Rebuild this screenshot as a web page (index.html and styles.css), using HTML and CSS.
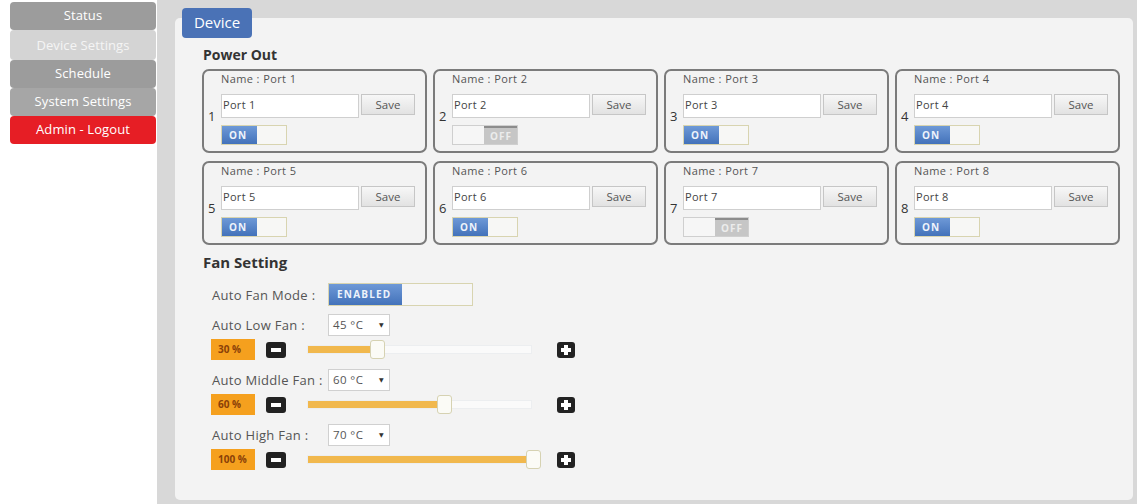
FILE: index.html
```html
<!DOCTYPE html>
<html>
<head>
<meta charset="utf-8">
<title>Device</title>
<link rel="stylesheet" href="styles.css">
</head>
<body>
<div class="page">
  <nav class="sidebar">
    <a class="nav nav-dark">Status</a>
    <a class="nav nav-light">Device Settings</a>
    <a class="nav nav-dark">Schedule</a>
    <a class="nav nav-mid">System Settings</a>
    <a class="nav nav-red">Admin - Logout</a>
  </nav>
  <main class="main">
    <section class="panel">
      <div class="tab">Device</div>
      <h2 class="title">Power Out</h2>
      <div class="ports">
        <div class="port">
          <div class="port-num">1</div>
          <div class="port-body">
            <div class="port-name">Name : Port 1</div>
            <div class="port-edit"><div class="input">Port 1</div><div class="save">Save</div></div>
            <div class="toggle on"><span class="t-on">ON</span><span class="t-rest"></span></div>
          </div>
        </div>
        <div class="port">
          <div class="port-num">2</div>
          <div class="port-body">
            <div class="port-name">Name : Port 2</div>
            <div class="port-edit"><div class="input">Port 2</div><div class="save">Save</div></div>
            <div class="toggle off"><span class="t-rest"></span><span class="t-off">OFF</span></div>
          </div>
        </div>
        <div class="port">
          <div class="port-num">3</div>
          <div class="port-body">
            <div class="port-name">Name : Port 3</div>
            <div class="port-edit"><div class="input">Port 3</div><div class="save">Save</div></div>
            <div class="toggle on"><span class="t-on">ON</span><span class="t-rest"></span></div>
          </div>
        </div>
        <div class="port">
          <div class="port-num">4</div>
          <div class="port-body">
            <div class="port-name">Name : Port 4</div>
            <div class="port-edit"><div class="input">Port 4</div><div class="save">Save</div></div>
            <div class="toggle on"><span class="t-on">ON</span><span class="t-rest"></span></div>
          </div>
        </div>
        <div class="port">
          <div class="port-num">5</div>
          <div class="port-body">
            <div class="port-name">Name : Port 5</div>
            <div class="port-edit"><div class="input">Port 5</div><div class="save">Save</div></div>
            <div class="toggle on"><span class="t-on">ON</span><span class="t-rest"></span></div>
          </div>
        </div>
        <div class="port">
          <div class="port-num">6</div>
          <div class="port-body">
            <div class="port-name">Name : Port 6</div>
            <div class="port-edit"><div class="input">Port 6</div><div class="save">Save</div></div>
            <div class="toggle on"><span class="t-on">ON</span><span class="t-rest"></span></div>
          </div>
        </div>
        <div class="port">
          <div class="port-num">7</div>
          <div class="port-body">
            <div class="port-name">Name : Port 7</div>
            <div class="port-edit"><div class="input">Port 7</div><div class="save">Save</div></div>
            <div class="toggle off"><span class="t-rest"></span><span class="t-off">OFF</span></div>
          </div>
        </div>
        <div class="port">
          <div class="port-num">8</div>
          <div class="port-body">
            <div class="port-name">Name : Port 8</div>
            <div class="port-edit"><div class="input">Port 8</div><div class="save">Save</div></div>
            <div class="toggle on"><span class="t-on">ON</span><span class="t-rest"></span></div>
          </div>
        </div>
      </div>

      <h2 class="title fan-title">Fan Setting</h2>
      <div class="fan">
        <div class="fan-row mode-row">
          <span class="fan-label">Auto Fan Mode :</span>
          <div class="enable"><span class="enable-on">ENABLED</span><span class="enable-rest"></span></div>
        </div>

        <div class="fan-group">
          <div class="fan-row">
            <span class="fan-label">Auto Low Fan :</span>
            <div class="select">45 °C <span class="caret">▼</span></div>
          </div>
          <div class="slider-row">
            <span class="badge">30 %</span>
            <span class="btn minus"></span>
            <div class="track"><div class="fill" style="width:30%"></div><span class="thumb" style="left:30%"></span></div>
            <span class="btn plus"></span>
          </div>
        </div>

        <div class="fan-group">
          <div class="fan-row">
            <span class="fan-label">Auto Middle Fan :</span>
            <div class="select">60 °C <span class="caret">▼</span></div>
          </div>
          <div class="slider-row">
            <span class="badge">60 %</span>
            <span class="btn minus"></span>
            <div class="track"><div class="fill" style="width:60%"></div><span class="thumb" style="left:60%"></span></div>
            <span class="btn plus"></span>
          </div>
        </div>

        <div class="fan-group">
          <div class="fan-row">
            <span class="fan-label">Auto High Fan :</span>
            <div class="select">70 °C <span class="caret">▼</span></div>
          </div>
          <div class="slider-row">
            <span class="badge">100 %</span>
            <span class="btn minus"></span>
            <div class="track"><div class="fill" style="width:100%"></div><span class="thumb" style="left:100%"></span></div>
            <span class="btn plus"></span>
          </div>
        </div>
      </div>
    </section>
  </main>
</div>
</body>
</html>
```

FILE: styles.css
```css
* { box-sizing: border-box; }
html, body { margin: 0; padding: 0; }
body {
  background: #fff;
  font-family: "Open Sans", "Noto Sans", "DejaVu Sans", sans-serif;
  width: 1137px;
  height: 504px;
  overflow: hidden;
  color: #444;
}
.page { display: flex; height: 504px; }

/* Sidebar */
.sidebar {
  width: 157px;
  flex: none;
  padding: 2px 1px 0 10px;
  display: flex;
  flex-direction: column;
  background: #fff;
}
.nav {
  display: block;
  height: 28px;
  line-height: 27px;
  text-align: center;
  color: #fff;
  font-size: 13px;
  letter-spacing: 0.1px;
  border-radius: 4px;
}
.nav-dark { background: #9c9c9c; }
.nav-light { background: #d4d4d4; color: #f4f4f4; height: 30px; line-height: 30px; }
.nav-mid { background: #a6a6a6; }
.nav-red { background: #e61e25; }

/* Main */
.main {
  flex: 1;
  background: #d8d8d8;
  padding: 18px 6px 4px 18px;
}
.panel {
  display: flow-root;
  height: 100%;
  background: #f3f3f3;
  border-radius: 5px;
  padding: 0 13px 0 27px;
}
.tab {
  margin-top: -10px;
  margin-left: -20px;
  width: 70px;
  height: 30px;
  line-height: 29px;
  background: #4a72b6;
  color: #fff;
  text-align: center;
  font-size: 15px;
  border-radius: 4px;
}
.title {
  margin: 8px 0 5px 1px;
  font-size: 14px;
  line-height: 18px;
  font-weight: bold;
  color: #333;
}
.fan-title { margin-top: 8px; font-size: 15px; margin-bottom: 12px; }

/* Ports */
.ports {
  display: grid;
  grid-template-columns: repeat(4, 225px);
  column-gap: 6px;
  row-gap: 8px;
}
.port {
  display: flex;
  border: 2px solid #7b7b7b;
  border-radius: 7px;
  padding: 1px 9px 6px 4px;
  height: 84px;
}
.port-num {
  width: 13px;
  flex: none;
  font-size: 13px;
  color: #333;
  align-self: center;
  margin-top: 14px;
}
.port-body { flex: 1; display: flex; flex-direction: column; }
.port-name {
  height: 14px;
  line-height: 14px;
  font-size: 11px;
  letter-spacing: 0.4px;
  color: #555;
  margin-bottom: 8px;
}
.port-edit { display: flex; gap: 2px; align-items: flex-start; }
.input {
  width: 138px;
  height: 24px;
  background: #fff;
  border: 1px solid #cfcfcf;
  font-size: 11px;
  letter-spacing: 0.3px;
  line-height: 20px;
  padding-left: 1px;
  color: #444;
}
.save {
  width: 54px;
  height: 21px;
  border: 1px solid #c6c6c6;
  background: linear-gradient(#f7f7f7, #e2e2e2);
  font-size: 11.5px;
  line-height: 19px;
  text-align: center;
  color: #555;
}
.toggle {
  margin-top: 7px;
  width: 66px;
  height: 20px;
  display: flex;
  font-size: 10px;
  font-weight: bold;
  letter-spacing: 1px;
}
.toggle.on { border: 1px solid #d8d4b0; }
.toggle.off { border: 1px solid #cfcfcf; }
.t-on {
  width: 35px;
  background: linear-gradient(#6e99d7, #4372ba);
  color: #eef3fb;
  line-height: 18px;
  padding-left: 7px;
}
.toggle.on .t-rest { flex: 1; background: #f7f7f5; }
.toggle.off .t-rest { width: 31px; background: #f6f6f6; }
.t-off {
  flex: 1;
  background: #c6c6c6;
  border-top: 2px solid #8c8c8c;
  color: #ececec;
  line-height: 16px;
  padding-left: 6px;
}

/* Fan */
.fan { padding-left: 9px; }
.fan-row { display: flex; align-items: center; height: 22px; }
.mode-row { height: 23px; margin-bottom: 8px; }
.fan-label {
  width: 117px;
  flex: none;
  padding-left: 1px;
  font-size: 13px;
  letter-spacing: 0.3px;
  color: #555;
  white-space: nowrap;
}
.enable {
  width: 145px;
  height: 23px;
  display: flex;
  border: 1px solid #d8d4b0;
}
.enable-on {
  width: 73px;
  background: linear-gradient(#6e99d7, #4372ba);
  color: #eef3fb;
  font-size: 10px;
  font-weight: bold;
  letter-spacing: 1.2px;
  line-height: 21px;
  padding-left: 8px;
}
.enable-rest { flex: 1; background: #f6f6f6; }
.select {
  width: 62px;
  height: 22px;
  background: #fff;
  border: 1px solid #d0d0d0;
  font-size: 11.5px;
  letter-spacing: 0.4px;
  line-height: 20px;
  padding-left: 4px;
  color: #555;
  display: flex;
  justify-content: space-between;
  padding-right: 5px;
  white-space: nowrap;
}
.caret { font-size: 6px; color: #333; }

.fan-group { margin-bottom: 9px; }
.slider-row {
  display: flex;
  align-items: center;
  height: 21px;
  margin-top: 3px;
}
.badge {
  width: 44px;
  height: 21px;
  background: #f5a01e;
  font-size: 10px;
  font-weight: bold;
  color: #8a4008;
  line-height: 21px;
  padding-left: 7px;
  flex: none;
  white-space: nowrap;
}
.btn {
  position: relative;
  flex: none;
  height: 16px;
  background: #222;
  border-radius: 3px;
}
.btn.minus { width: 20px; margin-left: 11px; }
.btn.plus { width: 18px; margin-left: 25px; }
.btn::before, .btn.plus::after {
  content: "";
  position: absolute;
  background: #fff;
  left: 50%;
  top: 50%;
}
.btn::before { width: 10px; height: 4px; margin: -2px 0 0 -5px; }
.btn.plus::after { width: 4px; height: 10px; margin: -5px 0 0 -2px; }
.track {
  position: relative;
  width: 225px;
  height: 9px;
  margin-left: 21px;
  background: #fafafa;
  border: 1px solid #eceef0;
  flex: none;
}
.fill { height: 100%; background: #f1b84d; }
.thumb {
  position: absolute;
  top: -6px;
  width: 15px;
  height: 19px;
  margin-left: -5px;
  background: #fbfbf6;
  border: 1px solid #d6d2b2;
  border-radius: 3px;
}
```
